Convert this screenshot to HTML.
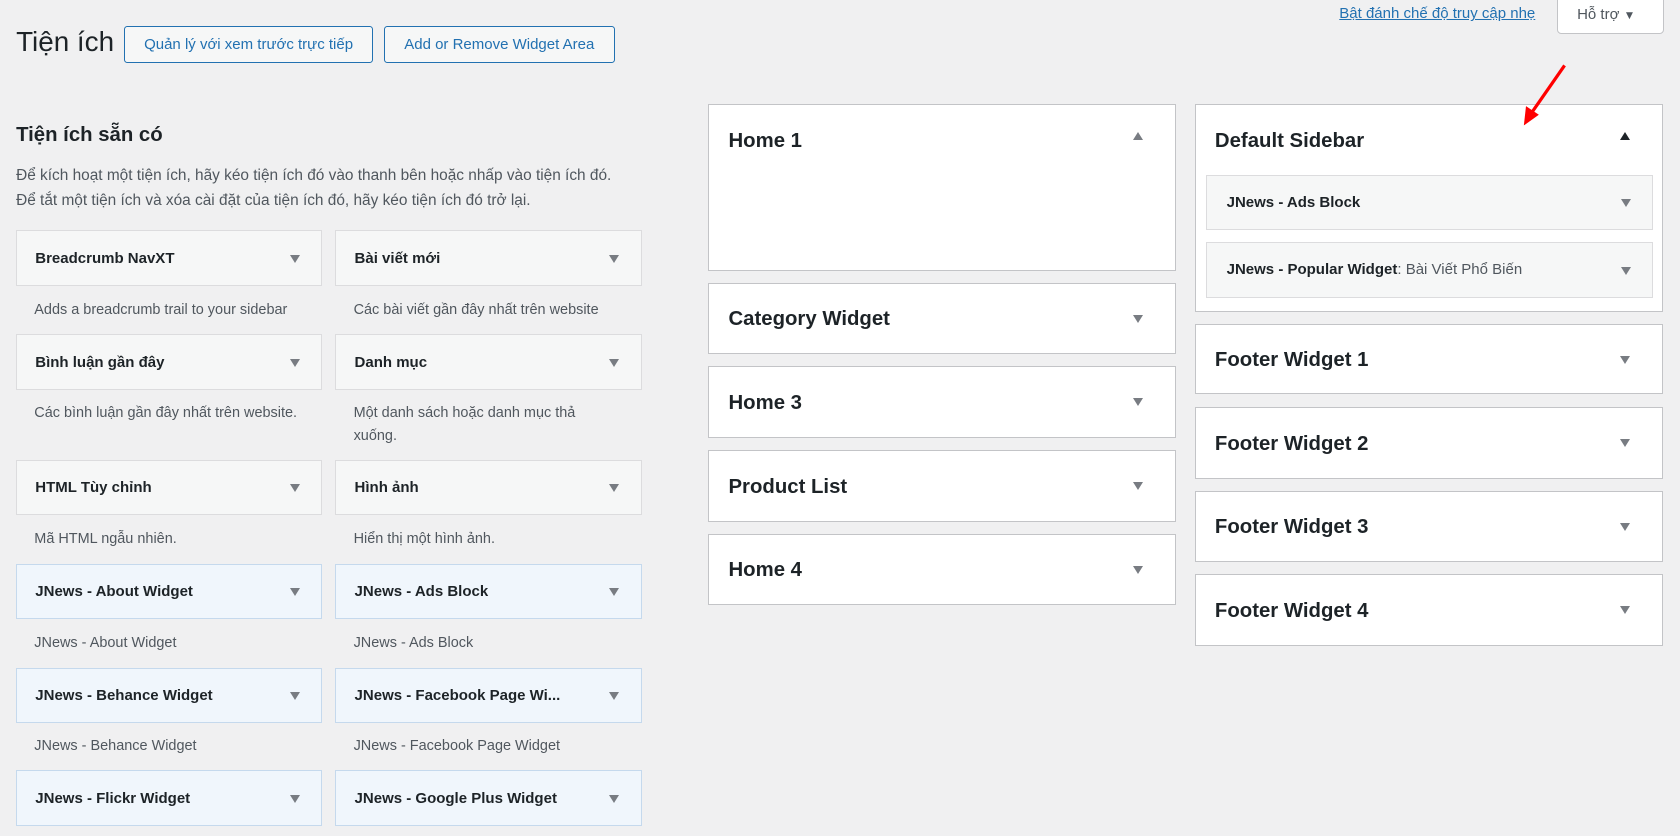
<!DOCTYPE html>
<html><head><meta charset="utf-8"><style>
html,body{margin:0;padding:0;background:#f0f0f1;width:1680px;height:836px;overflow:hidden}
#w{zoom:1.07143;position:relative;width:1568px;height:780px;font-family:"Liberation Sans","Noto Sans CJK SC",sans-serif;color:#1d2327}
.a{position:absolute;box-sizing:border-box}
.btn{border:1px solid #2271b1;border-radius:3px;color:#2271b1;font-size:14px;display:flex;align-items:center;justify-content:center;background:#f6f7f7}
.wd{background:#f6f7f7;border:1px solid #dcdcde;font-size:14px;font-weight:bold;padding-left:17px;display:flex;align-items:center;height:52px;width:286px}
.wd.b{background:#f0f6fc;border-color:#c5d9ed}
.t{position:absolute;width:0;height:0;border-left:5px solid transparent;border-right:5px solid transparent;border-top:8px solid #787c82}
.wd .t{right:20px;top:22px}
.ds{font-size:13.5px;color:#50575e;line-height:22px;width:260px}
.sb{background:#fff;border:1px solid #c3c4c7;font-size:19px;font-weight:bold;padding-left:18px;width:437px}
.sb>span{position:absolute;top:23px;left:18px}
.sb>.t{top:29px;right:30px}
.in{background:#f6f7f7;border:1px solid #dcdcde;font-size:14px;font-weight:bold;padding-left:18px;display:flex;align-items:center;width:417px;height:52px;left:10px}
.in>.t{right:20px;top:22px}
</style></head><body><div id="w">
<div class="a" style="left:15px;top:24px;font-size:26px">Tiện ích</div>
<div class="a btn" style="left:116px;top:24px;width:232px;height:35px">Quản lý với xem trước trực tiếp</div>
<div class="a btn" style="left:358px;top:24px;width:216px;height:35px">Add or Remove Widget Area</div>
<div class="a" style="left:1250px;top:5px;font-size:14px;color:#2271b1;text-decoration:underline">Bật đánh chế độ truy cập nhẹ</div>
<div class="a" style="left:1453px;top:-2px;width:100px;height:34px;background:#fff;border:1px solid #c3c4c7;border-radius:0 0 4px 4px;font-size:14px;color:#50575e;padding:7px 0 0 18px">Hỗ trợ <span style="font-size:11px">▼</span></div>
<div class="a" style="left:15px;top:116px;font-size:19px;font-weight:bold">Tiện ích sẵn có</div>
<div class="a" style="left:15px;top:153px;font-size:14.4px;color:#50575e;line-height:23px">Để kích hoạt một tiện ích, hãy kéo tiện ích đó vào thanh bên hoặc nhấp vào tiện ích đó.<br>Để tắt một tiện ích và xóa cài đặt của tiện ích đó, hãy kéo tiện ích đó trở lại.</div>

<div class="a wd" style="left:15px;top:215px">Breadcrumb NavXT<i class="t"></i></div>
<div class="a wd" style="left:313px;top:215px">Bài viết mới<i class="t"></i></div>
<div class="a ds" style="left:32px;top:279px">Adds a breadcrumb trail to your sidebar</div>
<div class="a ds" style="left:330px;top:279px">Các bài viết gần đây nhất trên website</div>
<div class="a wd" style="left:15px;top:312px">Bình luận gần đây<i class="t"></i></div>
<div class="a wd" style="left:313px;top:312px">Danh mục<i class="t"></i></div>
<div class="a ds" style="left:32px;top:375px">Các bình luận gần đây nhất trên website.</div>
<div class="a ds" style="left:330px;top:375px;width:240px">Một danh sách hoặc danh mục thả xuống.</div>
<div class="a wd" style="left:15px;top:429px">HTML Tùy chỉnh<i class="t"></i></div>
<div class="a wd" style="left:313px;top:429px">Hình ảnh<i class="t"></i></div>
<div class="a ds" style="left:32px;top:493px">Mã HTML ngẫu nhiên.</div>
<div class="a ds" style="left:330px;top:493px">Hiển thị một hình ảnh.</div>
<div class="a wd b" style="left:15px;top:526px">JNews - About Widget<i class="t"></i></div>
<div class="a wd b" style="left:313px;top:526px">JNews - Ads Block<i class="t"></i></div>
<div class="a ds" style="left:32px;top:590px">JNews - About Widget</div>
<div class="a ds" style="left:330px;top:590px">JNews - Ads Block</div>
<div class="a wd b" style="left:15px;top:623px">JNews - Behance Widget<i class="t"></i></div>
<div class="a wd b" style="left:313px;top:623px">JNews - Facebook Page Wi...<i class="t"></i></div>
<div class="a ds" style="left:32px;top:686px">JNews - Behance Widget</div>
<div class="a ds" style="left:330px;top:686px">JNews - Facebook Page Widget</div>
<div class="a wd b" style="left:15px;top:719px">JNews - Flickr Widget<i class="t"></i></div>
<div class="a wd b" style="left:313px;top:719px">JNews - Google Plus Widget<i class="t"></i></div>

<div class="a sb" style="left:661px;top:97px;height:156px"><span>Home 1</span><i class="t" style="border-top:0;border-bottom:8px solid #787c82;top:25px"></i></div>
<div class="a sb" style="left:661px;top:264px;height:66px"><span>Category Widget</span><i class="t"></i></div>
<div class="a sb" style="left:661px;top:342px;height:67px"><span>Home 3</span><i class="t"></i></div>
<div class="a sb" style="left:661px;top:420px;height:67px"><span>Product List</span><i class="t"></i></div>
<div class="a sb" style="left:661px;top:498px;height:67px"><span>Home 4</span><i class="t"></i></div>

<div class="a sb" style="left:1115px;top:97px;height:194px"><span>Default Sidebar</span><i class="t" style="border-top:0;border-bottom:8px solid #1d2327;top:25px"></i>
<div class="a in" style="top:65px">JNews - Ads Block<i class="t"></i></div>
<div class="a in" style="top:128px">JNews - Popular Widget<b style="font-weight:normal;color:#50575e">: Bài Viết Phổ Biến</b><i class="t"></i></div>
</div>
<div class="a sb" style="left:1115px;top:302px;height:66px"><span>Footer Widget 1</span><i class="t"></i></div>
<div class="a sb" style="left:1115px;top:380px;height:67px"><span>Footer Widget 2</span><i class="t"></i></div>
<div class="a sb" style="left:1115px;top:458px;height:67px"><span>Footer Widget 3</span><i class="t"></i></div>
<div class="a sb" style="left:1115px;top:536px;height:67px"><span>Footer Widget 4</span><i class="t"></i></div>

<svg class="a" style="left:1410px;top:55px" width="60" height="70"><line x1="50" y1="6" x2="18" y2="52" stroke="#f00" stroke-width="3"/><polygon points="12,62 14,44 26,52" fill="#f00"/></svg>
</div></body></html>
